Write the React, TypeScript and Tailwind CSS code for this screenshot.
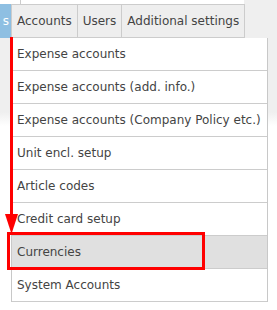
import React from 'react';

const items = [
  'Expense accounts',
  'Expense accounts (add. info.)',
  'Expense accounts (Company Policy etc.)',
  'Unit encl. setup',
  'Article codes',
  'Credit card setup',
  'Currencies',
  'System Accounts',
];

const tabs = ['Accounts', 'Users', 'Additional settings'];

export default function App() {
  return (
    <div className="relative w-[277px] h-[310px] overflow-hidden bg-[linear-gradient(to_bottom,#efefef_0,#efefef_112px,#ffffff_126px)] font-['DejaVu_Sans',sans-serif] text-[12px] text-[#444444]">
      {/* top strip */}
      <div className="flex h-[4px]">
        <div className="w-[244px] bg-white">
          <div className="ml-[20px] h-full w-px bg-[#cccccc]" />
        </div>
      </div>

      {/* tab bar */}
      <div className="flex h-[34px]">
        <div className="flex w-[11px] items-center justify-end overflow-hidden bg-[#8ebfe2] pr-[2px] text-white">
          s
        </div>
        {tabs.map((t, i) => (
          <div
            key={t}
            className={
              i === 0
                ? 'flex items-center whitespace-nowrap border border-[#cccccc] bg-[#eeeeee] px-[5px]'
                : 'flex items-center whitespace-nowrap border-y border-r border-[#cccccc] bg-[#eeeeee] px-[5px]'
            }
          >
            {t}
          </div>
        ))}
      </div>

      {/* dropdown menu */}
      <div className="ml-[11px] w-[257px] border-x border-[#c8c8c8] bg-white">
        {items.map((it) => (
          <div
            key={it}
            className={
              it === 'Currencies'
                ? 'flex h-[33px] items-center whitespace-nowrap border-b border-[#cccccc] bg-[#e0e0e0] pl-[5px]'
                : 'flex h-[33px] items-center whitespace-nowrap border-b border-[#cccccc] pl-[5px]'
            }
          >
            {it}
          </div>
        ))}
      </div>

      {/* annotation: arrow + highlight */}
      <svg className="pointer-events-none absolute left-0 top-0" width="277" height="310">
        <line x1="11.5" y1="37" x2="11.5" y2="218" stroke="#ff0000" strokeWidth="3" />
        <polygon points="5,214 18,214 11.5,234" fill="#ff0000" />
        <rect x="8.5" y="233.5" width="195" height="35" fill="none" stroke="#ff0000" strokeWidth="3" />
      </svg>
    </div>
  );
}
